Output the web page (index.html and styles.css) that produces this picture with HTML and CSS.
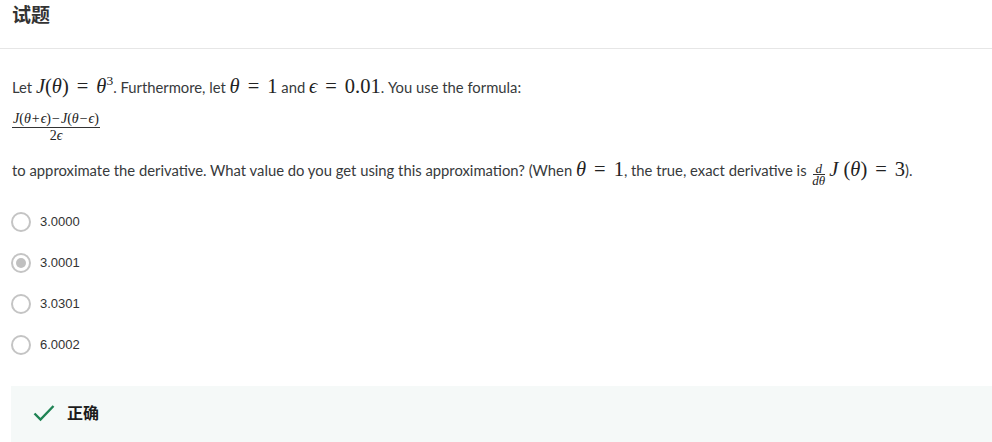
FILE: index.html
```html
<!DOCTYPE html>
<html>
<head>
<meta charset="utf-8">
<link rel="stylesheet" href="styles.css">
</head>
<body>
<div class="header"><h1 class="title">试题</h1></div>
<div class="question">
  <p class="line line1">Let <span class="m"><i>J</i>(<i>θ</i>)<span class="op">=</span><i>θ</i><sup>3</sup></span>. Furthermore, let <span class="m"><i>θ</i><span class="op">=</span>1</span> and <span class="m"><i>ϵ</i><span class="op">=</span>0.01</span>. You use the formula:</p>
  <div class="formula">
    <span class="frac">
      <span class="num"><i>J</i>(<i>θ</i><span class="bop">+</span><i>ϵ</i>)<span class="bop">−</span><i>J</i>(<i>θ</i><span class="bop">−</span><i>ϵ</i>)</span>
      <span class="den">2<i>ϵ</i></span>
    </span>
  </div>
  <p class="line line3">to approximate the derivative. What value do you get using this approximation? (When <span class="m"><i>θ</i><span class="op">=</span>1</span>, the true, exact derivative is <span class="m"><span class="sfrac"><span class="snum"><i>d</i></span><span class="sden"><i>dθ</i></span></span><i>J</i> (<i>θ</i>)<span class="op">=</span>3</span>).</p>
  <div class="options">
    <div class="opt"><span class="radio"></span><span class="lbl">3.0000</span></div>
    <div class="opt"><span class="radio checked"></span><span class="lbl">3.0001</span></div>
    <div class="opt"><span class="radio"></span><span class="lbl">3.0301</span></div>
    <div class="opt"><span class="radio"></span><span class="lbl">6.0002</span></div>
  </div>
  <div class="result">
    <svg class="check" width="22" height="18" viewBox="0 0 22 18"><path d="M1.5 9.5 L7.5 15.5 L20.5 2" fill="none" stroke="#1f8354" stroke-width="2.4"/></svg>
    <span class="rtext">正确</span>
  </div>
</div>
</body>
</html>
```
FILE: styles.css
```css
html, body { margin: 0; padding: 0; background: #fff; }
body { font-family: Lato, "Noto Sans CJK SC", sans-serif; color: #373a3c; }
.header { height: 49px; border-bottom: 1px solid #e6e6e6; padding: 0 12px; box-sizing: border-box; }
.title { margin: 0; padding-top: 2px; font-size: 19px; line-height: 24px; font-weight: 700; color: #333; font-family: "Noto Sans CJK SC", sans-serif; }
.question { padding: 0 0 0 12px; }
.line { margin: 0; font-size: 14.8px; line-height: 22px; color: #373a3c; }
.line1 { padding-top: 27px; }
.m { font-family: "Liberation Serif", "DejaVu Serif", serif; font-size: 20.5px; line-height: 1; color: #222; white-space: nowrap; }
.m i { font-style: italic; }
.m sup { font-size: 13.5px; vertical-align: 8px; line-height: 0; }
.op { padding: 0 8px; }
.formula { padding-top: 11px; height: 31px; font-family: "Liberation Serif", serif; color: #222; }
.frac { display: inline-flex; flex-direction: column; align-items: center; font-size: 14px; line-height: 14px; }
.bop { padding: 0 1px; }
.num { border-bottom: 1px solid #333; padding: 0 1px 1px; }
.den { padding-top: 1px; }
.line3 { padding-top: 19px; }
.sfrac { display: inline-flex; flex-direction: column; align-items: center; font-size: 13px; line-height: 11px; vertical-align: 3px; margin: 0 4px 0 2px; }
.snum { border-bottom: 1px solid #333; padding: 0 3px; }
.options { padding-top: 25px; display: flex; flex-direction: column; gap: 20px; }
.opt { display: flex; align-items: center; height: 21px; }
.radio { width: 16px; height: 16px; border: 2px solid #c4c4c4; border-radius: 50%; margin-left: -1px; box-sizing: content-box; display: flex; align-items: center; justify-content: center; }
.radio.checked::after { content: ""; width: 10px; height: 10px; border-radius: 50%; background: #c0c0c0; }
.lbl { margin-left: 9px; font-family: "Liberation Sans", Arial, sans-serif; font-size: 13px; color: #333; }
.result { margin-top: 31px; margin-left: -1px; background: #f5f9f8; height: 60px; display: flex; align-items: flex-start; padding-left: 22px; padding-top: 17px; box-sizing: border-box; }
.check { display: block; margin-top: 1px; }
.rtext { margin-left: 12px; font-family: "Noto Sans CJK SC", sans-serif; font-weight: 700; font-size: 16px; line-height: 18px; color: #1c1c1c; }
```
